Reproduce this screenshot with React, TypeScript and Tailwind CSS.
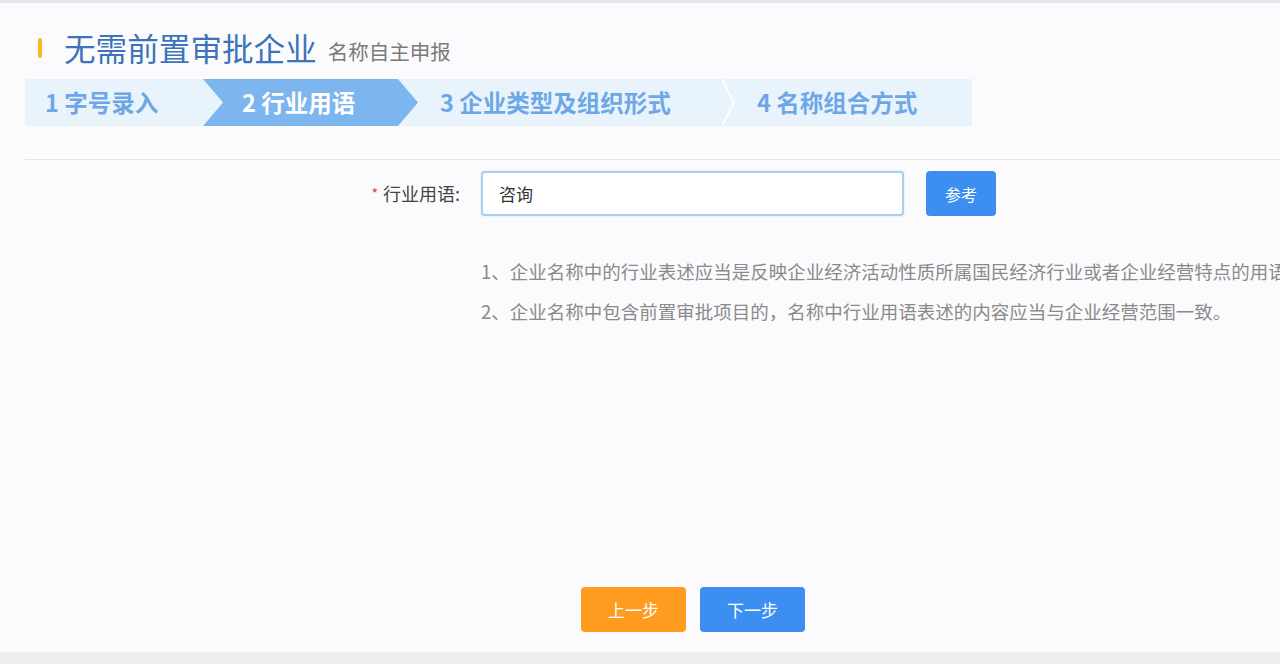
import React from 'react';

const font = { fontFamily: '"Noto Sans CJK SC", "Noto Sans", sans-serif' };

function StepsBar() {
  return (
    <div className="flex h-[47px] w-[947px] bg-[#e9f3fc] text-[23.5px] font-bold text-[#6ea7e6]">
      <div className="flex w-[178px] items-center pl-[20px]">1 字号录入</div>
      <div className="flex w-[215px] items-center bg-[#7db5ef] pl-[39px] text-white [clip-path:polygon(0_0,195px_0,100%_50%,195px_100%,0_100%,20px_50%)]">
        2 行业用语
      </div>
      <div className="flex w-[304px] items-center pl-[22px]">3 企业类型及组织形式</div>
      <div className="relative flex flex-1 items-center pl-[35px]">
        <svg className="absolute left-0 top-0" width="16" height="47" viewBox="0 0 16 47">
          <polyline points="0,0 12,23.5 0,47" fill="none" stroke="#ffffff" strokeWidth="1.5" />
        </svg>
        4 名称组合方式
      </div>
    </div>
  );
}

export default function App() {
  return (
    <main
      className="flex h-[664px] w-full flex-col overflow-hidden border-t-[3px] border-[#e6e6ea] bg-[#fbfbfd]"
      style={font}
    >
      {/* Title */}
      <div className="mt-[25px] flex h-[40px] items-center pl-[38px]">
        <span className="h-[20px] w-[4px] rounded-sm bg-[#f5b921]" />
        <h1 className="ml-[22px] text-[31.6px] font-normal leading-none text-[#3c74ba]">无需前置审批企业</h1>
        <span className="ml-[11px] mt-[6px] text-[20.5px] leading-none text-[#7a7a7a]">名称自主申报</span>
      </div>

      <div className="mt-[11px] pl-[25px]">
        <StepsBar />
      </div>

      <div className="ml-[25px] mt-[33px] h-px bg-[#e2e5ea]" />

      {/* Form row */}
      <div className="mt-[11px] flex h-[45px] items-center">
        <label className="flex w-[460px] items-center justify-end text-[18px] text-[#444]">
          <span className="mr-[5px] text-[14px] text-[#e23b3b]">*</span>
          行业用语:
        </label>
        <div className="ml-[21px] flex h-[45px] w-[423px] items-center rounded-[4px] border-2 border-[#a9cfef] bg-white pl-[16px] text-[17px] text-[#333] shadow-[0_0_2px_rgba(100,160,220,0.35)]">
          咨询
        </div>
        <button className="ml-[22px] h-[45px] w-[70px] rounded-[4px] bg-[#3c8ff0] text-[16px] text-white">
          参考
        </button>
      </div>

      {/* Hints */}
      <div className="mt-[35px] whitespace-nowrap pl-[481px] text-[18.5px] leading-[40px] text-[#8a8a8a]">
        <p>1、企业名称中的行业表述应当是反映企业经济活动性质所属国民经济行业或者企业经营特点的用语。</p>
        <p>2、企业名称中包含前置审批项目的，名称中行业用语表述的内容应当与企业经营范围一致。</p>
      </div>

      <div className="flex-1" />

      {/* Actions */}
      <div className="flex gap-[14px] pl-[581px]">
        <button className="h-[45px] w-[105px] rounded-[4px] bg-[#ff9b1f] text-[17px] text-white">上一步</button>
        <button className="h-[45px] w-[105px] rounded-[4px] bg-[#3c8ff0] text-[17px] text-white">下一步</button>
      </div>

      <div className="mt-[20px] h-[12px] bg-[#ededf0]" />
    </main>
  );
}
